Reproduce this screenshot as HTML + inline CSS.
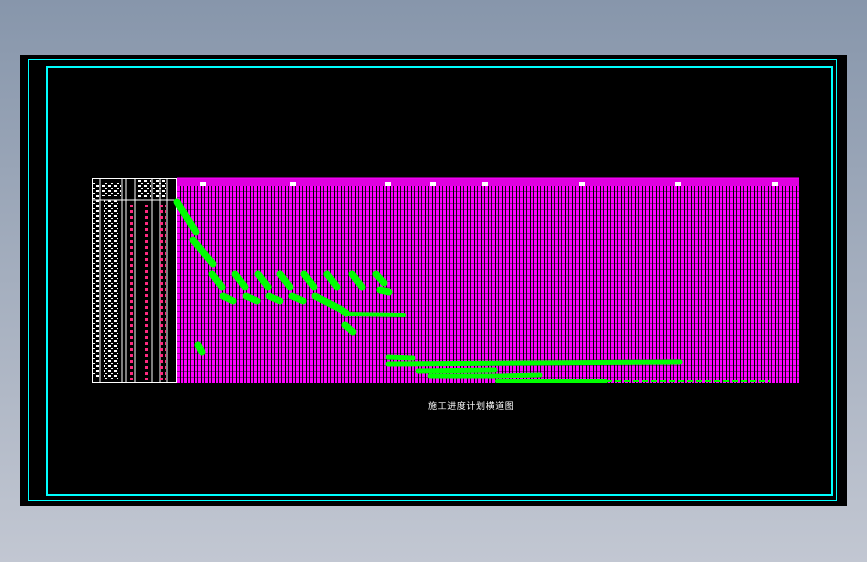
<!DOCTYPE html>
<html><head><meta charset="utf-8"><style>
html,body{margin:0;padding:0}
body{width:867px;height:562px;position:relative;overflow:hidden;background:linear-gradient(#8796ab,#c2c7d2);font-family:"Liberation Sans","Noto Sans CJK SC",sans-serif}
#blk{position:absolute;left:20px;top:55px;width:827px;height:451px;background:#000}
#o{position:absolute;left:28px;top:59px;width:809px;height:442px;border:1px solid #00ffff;box-sizing:border-box}
#i{position:absolute;left:46px;top:66px;width:787px;height:430px;border:2px solid #00ffff;box-sizing:border-box}
#grid{position:absolute;left:177px;top:186px;width:622px;height:197px;
background:
repeating-linear-gradient(180deg,transparent 0 5px,rgba(0,0,0,.4) 5px 6px),
repeating-linear-gradient(90deg,#f0f 0 3px,#000 3px 4px,#f0f 4px 6px,#200020 6px 7px)}
#hdr{position:absolute;left:177px;top:178px;width:622px;height:8px;background:#e000e0}
#left{position:absolute;left:92px;top:178px;width:85px;height:205px;background:#000;border:1px solid #fff;box-sizing:border-box}
#title{position:absolute;left:428px;top:399px;color:#fff;font-size:9px;letter-spacing:0.6px;white-space:nowrap}
</style></head><body>
<div id="blk"></div><div id="o"></div><div id="i"></div>
<div id="hdr"></div>
<div id="grid"></div>
<div id="left"></div>
<svg width="867" height="562" style="position:absolute;left:0;top:0">
<defs>
<pattern id="sp" width="6" height="5" patternUnits="userSpaceOnUse"><rect x="0" y="0" width="3" height="2" fill="#fff"/><rect x="3" y="3" width="2" height="1" fill="#fff"/></pattern>
<pattern id="rp" width="5" height="6" patternUnits="userSpaceOnUse"><rect x="0" y="0" width="3" height="3" fill="#ff2a80"/></pattern>
</defs>
<g stroke="#fff" stroke-width="1">
<line x1="100" y1="178" x2="100" y2="383"/><line x1="122" y1="178" x2="122" y2="383"/>
<line x1="126" y1="178" x2="126" y2="383"/><line x1="135" y1="178" x2="135" y2="383"/>
<line x1="152" y1="178" x2="152" y2="383"/><line x1="160" y1="178" x2="160" y2="383"/>
<line x1="167" y1="178" x2="167" y2="383"/><line x1="92" y1="200" x2="177" y2="200"/>
</g>
<rect x="104" y="200" width="14" height="180" fill="url(#sp)"/>
<rect x="93" y="182" width="6" height="195" fill="url(#sp)"/>
<rect x="137" y="180" width="14" height="18" fill="url(#sp)"/>
<rect x="153" y="180" width="13" height="18" fill="url(#sp)"/>
<rect x="101" y="182" width="20" height="14" fill="url(#sp)"/>
<rect x="128" y="205" width="6" height="175" fill="url(#rp)"/>
<rect x="143" y="205" width="6" height="175" fill="url(#rp)"/>
<rect x="160" y="205" width="6" height="175" fill="url(#rp)"/>
<line x1="177" y1="178" x2="799" y2="178" stroke="#f0f"/>
<g fill="#fff"><rect x="200" y="182" width="6" height="4"/><rect x="290" y="182" width="6" height="4"/><rect x="385" y="182" width="6" height="4"/><rect x="430" y="182" width="6" height="4"/><rect x="482" y="182" width="6" height="4"/><rect x="579" y="182" width="6" height="4"/><rect x="675" y="182" width="6" height="4"/><rect x="772" y="182" width="6" height="4"/></g>
<g stroke="#00ff00" stroke-width="7" stroke-linecap="round" stroke-linejoin="round" fill="none">
<path d="M177 202 L196 232"/><path d="M193 240 L213 264"/>
<path d="M212 274 L222 287"/><path d="M235 274 L245 287"/><path d="M258 274 L268 287"/><path d="M280 274 L290 287"/><path d="M304 274 L314 287"/><path d="M327 274 L337 287"/><path d="M352 274 L362 287"/><path d="M376 274 L384 283"/>
<path d="M223 296 L233 301"/><path d="M246 296 L257 301"/><path d="M269 296 L280 301"/><path d="M292 296 L303 301"/><path d="M315 296 L340 309 L346 313"/>
<path d="M346 314 L404 315" stroke-width="4"/>
<path d="M345 325 L353 332"/><path d="M380 290 L389 292"/><path d="M198 345 L202 352"/>
<path d="M388 357 L413 358" stroke-width="5"/><path d="M388 364 L680 362" stroke-width="5"/><path d="M418 371 L495 370" stroke-width="5"/><path d="M430 376 L500 376 L540 375" stroke-width="5"/><path d="M497 381 L606 381" stroke-width="4"/>
</g>
<path d="M606 381 L770 381" stroke="#00ff00" stroke-width="2" stroke-dasharray="6 3"/>
</svg>
<div id="title">施工进度计划横道图</div>
</body></html>
